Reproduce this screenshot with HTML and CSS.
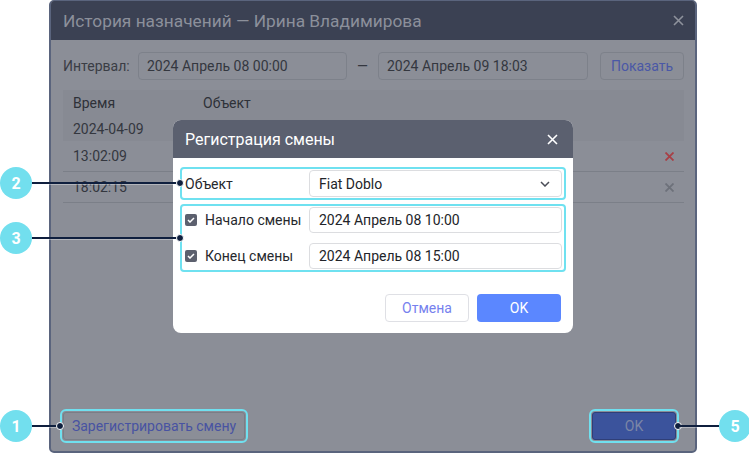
FILE: index.html
```html
<!DOCTYPE html>
<html lang="ru">
<head>
  <meta charset="UTF-8">
  <title>История назначений</title>
  <link rel="stylesheet" href="styles.css">
</head>
<body>
  <div class="stage">
    <div class="dialog">
      <div class="dlg-head">
        <span class="dlg-title">История назначений — Ирина Владимирова</span>
        <svg class="dlg-close" width="11" height="11" viewBox="0 0 11 11"><path d="M1 1L10 10M10 1L1 10" stroke="#8e929c" stroke-width="1.6"/></svg>
      </div>
      <div class="dlg-body">
        <div class="interval">
          <span class="int-label">Интервал:</span>
          <div class="field f1">2024 Апрель 08 00:00</div>
          <span class="dash">—</span>
          <div class="field f2">2024 Апрель 09 18:03</div>
          <button class="btn-show">Показать</button>
        </div>
        <div class="table">
          <div class="thead">
            <div class="row head"><span class="c-time">Время</span><span>Объект</span></div>
            <div class="row group"><span class="c-time">2024-04-09</span></div>
          </div>
          <div class="row item">
            <span class="c-time">13:02:09</span>
            <svg class="del" width="9" height="9" viewBox="0 0 9 9"><path d="M0.5 0.5L8.5 8.5M8.5 0.5L0.5 8.5" stroke="#a83f45" stroke-width="1.8"/></svg>
          </div>
          <div class="row item">
            <span class="c-time">18:02:15</span>
            <svg class="del" width="9" height="9" viewBox="0 0 9 9"><path d="M0.5 0.5L8.5 8.5M8.5 0.5L0.5 8.5" stroke="#6d717a" stroke-width="1.8"/></svg>
          </div>
        </div>
        <div class="dlg-foot">
          <button class="btn-reg mark">Зарегистрировать смену</button>
          <button class="btn-ok mark">OK</button>
        </div>
      </div>
    </div>

    <div class="modal">
      <div class="modal-head">
        <span class="modal-title">Регистрация смены</span>
        <svg class="modal-close" width="11" height="11" viewBox="0 0 11 11"><path d="M1 1L10 10M10 1L1 10" stroke="#ffffff" stroke-width="1.6"/></svg>
      </div>
      <div class="modal-body">
        <div class="grp g1">
          <span class="m-label">Объект</span>
          <div class="input select">
            <span>Fiat Doblo</span>
            <svg width="10" height="6" viewBox="0 0 10 6"><path d="M1 1L5 5L9 1" fill="none" stroke="#4a4d57" stroke-width="1.5"/></svg>
          </div>
        </div>
        <div class="grp g2">
          <div class="frow">
            <span class="check"><svg width="8" height="6" viewBox="0 0 8 6"><path d="M1 3L3 5L7 1" fill="none" stroke="#fff" stroke-width="1.5"/></svg></span>
            <span class="m-label">Начало смены</span>
            <div class="input">2024 Апрель 08 10:00</div>
          </div>
          <div class="frow">
            <span class="check"><svg width="8" height="6" viewBox="0 0 8 6"><path d="M1 3L3 5L7 1" fill="none" stroke="#fff" stroke-width="1.5"/></svg></span>
            <span class="m-label">Конец смены</span>
            <div class="input">2024 Апрель 08 15:00</div>
          </div>
        </div>
        <div class="modal-foot">
          <button class="btn-cancel">Отмена</button>
          <button class="btn-primary">OK</button>
        </div>
      </div>
    </div>

    <!-- callouts -->
    <div class="callout c2"><span class="num">2</span><span class="line"></span><span class="dot"></span></div>
    <div class="callout c3"><span class="num">3</span><span class="line"></span><span class="dot"></span></div>
    <div class="callout c1"><span class="num">1</span><span class="line"></span><span class="dot"></span></div>
    <div class="callout c5 rev"><span class="dot"></span><span class="line"></span><span class="num">5</span></div>
  </div>
</body>
</html>
```
FILE: styles.css
```css
* {
  margin: 0;
  padding: 0;
  box-sizing: border-box;
  font-family: Roboto, 'Liberation Sans', sans-serif;
}
body {
  background: #ffffff;
  width: 749px;
  height: 454px;
  overflow: hidden;
}
button {
  font-family: inherit;
  cursor: pointer;
}
.stage {
  position: relative;
  width: 749px;
  height: 454px;
}

/* dimmed main dialog */
.dialog {
  margin-left: 49px;
  width: 648px;
  height: 453px;
  border: 2px solid #5a647d;
  border-top-width: 1px;
  border-radius: 5px;
  background: #8b8e97;
  display: flex;
  flex-direction: column;
  overflow: hidden;
}
.dlg-head {
  height: 39px;
  background: #3b4153;
  display: flex;
  align-items: center;
  justify-content: space-between;
  padding: 0 11px 0 12px;
}
.dlg-title {
  color: #8c909b;
  font-size: 17.3px;
}
.dlg-body {
  flex: 1;
  display: flex;
  flex-direction: column;
  padding: 12px 11px 11px 12px;
}
.interval {
  display: flex;
  align-items: center;
  height: 28px;
  font-size: 14px;
  color: #3a3d45;
}
.int-label {
  width: 75px;
}
.field {
  height: 28px;
  border: 1px solid #7d818a;
  border-radius: 4px;
  padding-left: 8px;
  display: flex;
  align-items: center;
  color: #34373f;
}
.f1 { width: 209px; }
.f2 { width: 210px; }
.dash {
  width: 31px;
  text-align: center;
  color: #34373f;
}
.btn-show {
  margin-left: 12px;
  width: 84px;
  height: 28px;
  border: 1px solid #7d818a;
  border-radius: 4px;
  background: transparent;
  color: #4a58a6;
  font-size: 14px;
}
.table {
  margin-top: 10px;
  font-size: 14px;
  color: #34373f;
}
.thead {
  background: #878a93;
}
.row {
  display: flex;
  align-items: center;
  padding: 0 10px;
}
.row.head { height: 26px; color: #2e3138; }
.row.group { height: 25px; }
.row.item {
  height: 31px;
  border-bottom: 1px solid #7b7f88;
  justify-content: space-between;
  padding-right: 10px;
}
.c-time { width: 130px; }
.dlg-foot {
  margin-top: auto;
  display: flex;
  justify-content: space-between;
  padding-right: 8px;
}
.mark {
  outline: 2px solid #70e0ef;
  outline-offset: 1px;
}
.btn-reg {
  width: 182px;
  height: 28px;
  border: 1px solid #7a7e87;
  border-radius: 3px;
  background: transparent;
  color: #4853a2;
  font-size: 14px;
}
.btn-ok {
  width: 84px;
  height: 28px;
  border: 1px solid #2f3f78;
  border-radius: 3px;
  background: #3b539c;
  color: #7b86a6;
  font-size: 14px;
}

/* registration modal on top */
.modal {
  position: absolute;
  left: 173px;
  top: 120px;
  width: 400px;
  height: 213px;
  background: #ffffff;
  border-radius: 8px;
  overflow: hidden;
}
.modal-head {
  height: 38px;
  background: #5b606f;
  display: flex;
  align-items: center;
  justify-content: space-between;
  padding: 0 15px 0 12px;
}
.modal-title {
  color: #ffffff;
  font-size: 16px;
}
.modal-body {
  padding: 9px 7px 0 7px;
  font-size: 14px;
  color: #26282d;
}
.grp {
  border: 2px solid #6fe1f0;
  border-radius: 4px;
}
.g1 {
  display: flex;
  align-items: center;
  padding: 1px 2px 1px 3px;
}
.g2 {
  margin-top: 4px;
  padding: 1px 2px 1px 3px;
  display: flex;
  flex-direction: column;
  gap: 10px;
}
.g2 .input {
  height: 26px;
}
.m-label {
  width: 124px;
}
.frow {
  display: flex;
  align-items: center;
}
.frow .m-label {
  width: 104px;
}
.check {
  width: 12px;
  height: 12px;
  border-radius: 2px;
  background: #5c606e;
  margin-right: 8px;
  display: flex;
  align-items: center;
  justify-content: center;
}
.input {
  flex: 1;
  height: 27px;
  border: 1px solid #dcdde0;
  border-radius: 4px;
  padding-left: 9px;
  display: flex;
  align-items: center;
  color: #222429;
}
.select {
  justify-content: space-between;
  padding-right: 11px;
}
.modal-foot {
  margin-top: 22px;
  display: flex;
  justify-content: flex-end;
  gap: 8px;
  padding-right: 5px;
}
.btn-cancel {
  width: 84px;
  height: 28px;
  border: 1px solid #dfe0e5;
  border-radius: 4px;
  background: #ffffff;
  color: #7681ee;
  font-size: 14px;
}
.btn-primary {
  width: 84px;
  height: 28px;
  border: none;
  border-radius: 4px;
  background: #5b87ff;
  color: #ffffff;
  font-size: 14px;
}

/* annotation callouts */
.callout {
  position: absolute;
  display: flex;
  align-items: center;
  height: 32px;
}
.callout .num {
  width: 32px;
  height: 32px;
  border-radius: 50%;
  background: #72dfee;
  color: #ffffff;
  font-weight: bold;
  font-size: 16px;
  display: flex;
  align-items: center;
  justify-content: center;
}
.callout .line {
  height: 2px;
  background: #0f1f3e;
  box-shadow: 0 1px 0 rgba(255,255,255,0.35);
}
.callout .dot {
  width: 8px;
  height: 8px;
  border-radius: 50%;
  background: #0f1f3e;
  border: 1px solid #ffffff;
  margin-left: -3px;
}
.callout.rev .dot {
  margin-left: 0;
  margin-right: -3px;
}
.c2 { left: 0; top: 167px; }
.c2 .line { width: 147px; }
.c3 { left: 0; top: 222px; }
.c3 .line { width: 147px; }
.c1 { left: 0; top: 410px; }
.c1 .line { width: 27px; }
.c5 { left: 674px; top: 410px; }
.c5 .line { width: 40px; }
```
